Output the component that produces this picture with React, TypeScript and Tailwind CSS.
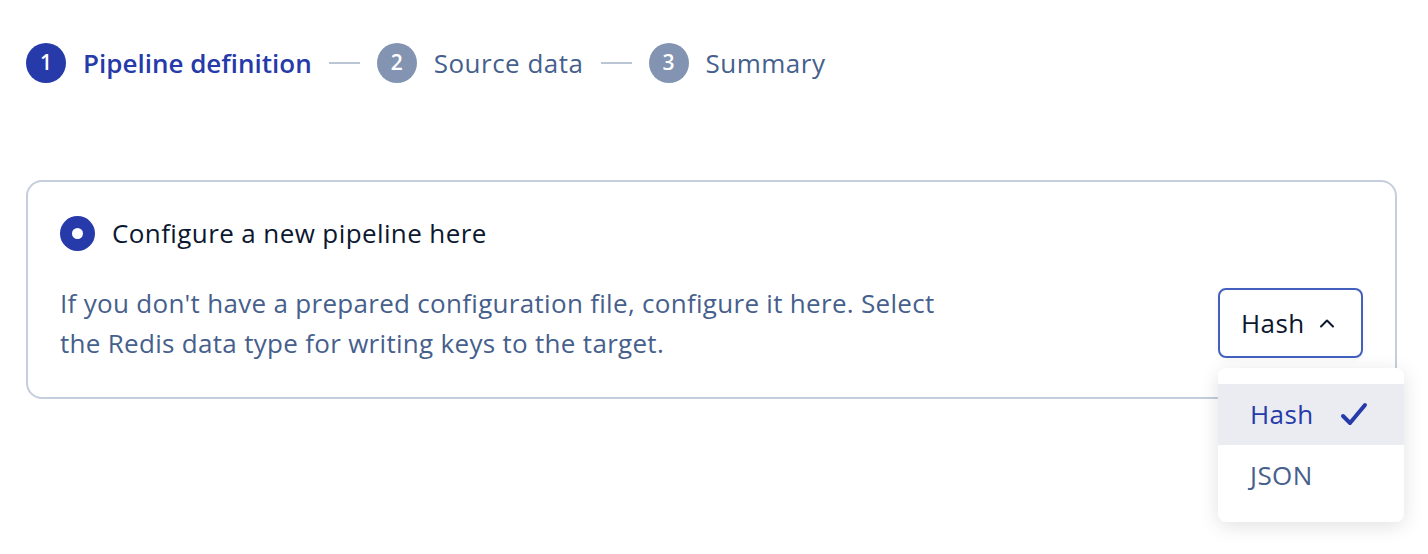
import React from "react";

const font = { fontFamily: "'Open Sans', 'Noto Sans', sans-serif" };

function Step({ n, label, active }: { n: number; label: string; active?: boolean }) {
  return (
    <div className="flex items-center gap-[17px]">
      <div
        className={`flex h-[40px] w-[40px] items-center justify-center rounded-full text-[21px] font-semibold text-white ${
          active ? "bg-[#263aa9]" : "bg-[#8294b1]"
        }`}
      >
        {n}
      </div>
      <span
        className={`text-[26px] ${
          active ? "font-semibold tracking-[0px] text-[#263aa9]" : "tracking-[0.5px] text-[#465f8c]"
        }`}
      >
        {label}
      </span>
    </div>
  );
}

function Sep() {
  return <div className="mx-[17px] h-[2px] w-[31px] bg-[#bac6d6]" />;
}

export default function App() {
  return (
    <div className="min-h-[554px] w-[1428px] bg-white pl-[26px] pr-[31px] pt-[43px]" style={font}>
      <div className="flex items-center">
        <Step n={1} label="Pipeline definition" active />
        <Sep />
        <Step n={2} label="Source data" />
        <Sep />
        <Step n={3} label="Summary" />
      </div>

      <div className="mt-[97px] rounded-[16px] border-2 border-[#c4cedc] px-[32px] pb-[34px] pt-[32px]">
        <div className="flex items-center gap-[17px]">
          <div className="flex h-[35px] w-[35px] items-center justify-center rounded-full bg-[#263aa9]">
            <div className="h-[11px] w-[11px] rounded-full bg-white" />
          </div>
          <span className="text-[26px] tracking-[0.4px] text-[#0c1730]">Configure a new pipeline here</span>
        </div>
        <div className="mt-[30px] flex items-center justify-between">
          <p className="w-[900px] text-[26px] leading-[40px] tracking-[0.3px] text-[#465f8c]">
            If you don't have a prepared configuration file, configure it here. Select the Redis data type for writing keys to the target.
          </p>
          <div className="relative">
            <div className="flex h-[70px] w-[145px] items-center rounded-[8px] border-2 border-[#4460bf] pl-[21px] shadow-[0_2px_6px_rgba(0,0,0,0.04)]">
              <span className="text-[26px] tracking-[0.4px] text-[#0c1730]">Hash</span>
              <svg className="ml-[14px]" width="16" height="10" viewBox="0 0 16 10" fill="none">
                <path d="M2 8.5L8 2.5L14 8.5" stroke="#0c1730" strokeWidth="2" strokeLinecap="round" strokeLinejoin="round" />
              </svg>
            </div>
            <div className="absolute left-0 top-[80px] w-[186px] rounded-[8px] bg-white py-[16px] shadow-[0_4px_20px_rgba(0,0,0,0.12)]">
              <div className="flex h-[61px] items-center justify-between bg-[#eaecf1] pl-[32px] pr-[36px]">
                <span className="text-[26px] tracking-[0.4px] text-[#263aa9]">Hash</span>
                <svg width="28" height="26" viewBox="0 0 28 26" fill="none">
                  <path d="M3 14L10 21L25 3" stroke="#263aa9" strokeWidth="4" strokeLinecap="round" strokeLinejoin="round" />
                </svg>
              </div>
              <div className="flex h-[61px] items-center pl-[32px]">
                <span className="text-[26px] tracking-[0.4px] text-[#465f8c]">JSON</span>
              </div>
            </div>
          </div>
        </div>
      </div>
    </div>
  );
}
